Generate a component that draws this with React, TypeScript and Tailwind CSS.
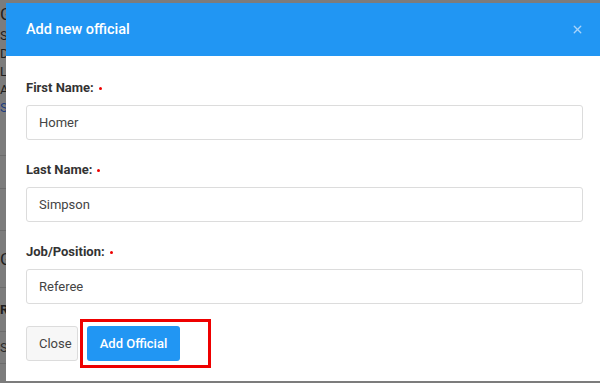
import { X } from "lucide-react";

const fields = [
  { label: "First Name:", value: "Homer" },
  { label: "Last Name:", value: "Simpson" },
  { label: "Job/Position:", value: "Referee" },
];

// dimmed page rows peeking out on the left of the modal
const backdropRows = [
  { text: "G", cls: "h-[24px] text-[17px] text-[#1e1e1e]" },
  { text: "Sp", cls: "h-[18px] text-[13px] text-[#1e1e1e]" },
  { text: "Do", cls: "h-[18px] text-[13px] text-[#1e1e1e]" },
  { text: "Lo", cls: "h-[18px] text-[13px] text-[#1e1e1e]" },
  { text: "At", cls: "h-[18px] text-[13px] text-[#1e1e1e]" },
  { text: "Sv", cls: "h-[18px] text-[13px] text-[#1d3d80]" },
];

const Field = ({ label, value }: { label: string; value: string }) => (
  <div className="flex flex-col">
    <label className="flex items-center h-5 mt-[1px] text-[13px] font-bold text-[#333]">
      {label}
      <span className="ml-[5px] w-[3px] h-[3px] rounded-full bg-[#e00]" />
    </label>
    <div className="mt-[7px] h-[35px] border border-[#dcdcdc] rounded-[3px] flex items-center px-3 text-[13px] text-[#444]">
      {value}
    </div>
  </div>
);

export default function App() {
  return (
    <div className="relative w-[600px] h-[383px] overflow-hidden bg-[#7c7c7c] font-['Roboto',sans-serif]">
      {/* page behind the overlay */}
      <div className="flex flex-col pt-[2px] leading-none">
        {backdropRows.map((r) => (
          <div key={r.text} className={`flex items-center ${r.cls}`}>
            {r.text}
          </div>
        ))}
        <div className="h-[40px] border-b border-[#6c6c6c]" />
        <div className="h-[33px] border-b border-[#6c6c6c]" />
        <div className="h-[42px] border-b border-[#6c6c6c]" />
        <div className="h-[57px] border-b border-[#6c6c6c] flex items-center text-[17px] text-[#1e1e1e]">
          G
        </div>
        <div className="h-[44px] border-b border-[#6c6c6c] flex items-center text-[13px] font-bold text-[#1e1e1e]">
          Re
        </div>
        <div className="h-[32px] border-b border-[#6c6c6c] flex items-center text-[13px] text-[#2a2a2a]">
          S
        </div>
      </div>

      {/* modal */}
      <div className="absolute left-[6px] top-[3px] w-[597px] h-[378px] bg-white flex flex-col">
        <div className="h-[53px] bg-[#2196f3] flex items-center justify-between pl-5 pr-[19px]">
          <h2 className="text-[14.5px] font-medium text-white">Add new official</h2>
          <X className="w-[13px] h-[13px] text-[#a9d4fa]" strokeWidth={2.5} />
        </div>
        <div className="flex flex-col gap-[19px] px-5 pt-[21px]">
          {fields.map((f) => (
            <Field key={f.label} {...f} />
          ))}
        </div>
        <div className="flex gap-[9px] px-5 pt-[22px]">
          <button className="h-[35px] w-[52px] border border-[#dcdcdc] rounded-[3px] bg-[#f7f7f7] pl-[12px] text-left text-[13px] text-[#444]">
            Close
          </button>
          <button className="h-[35px] w-[93px] rounded-[3px] bg-[#2196f3] text-[13px] font-medium text-white">
            Add Official
          </button>
        </div>
      </div>

      {/* highlight annotation */}
      <div className="absolute left-[80px] top-[319px] w-[131px] h-[49px] border-[3px] border-[#ee0000]" />
    </div>
  );
}
